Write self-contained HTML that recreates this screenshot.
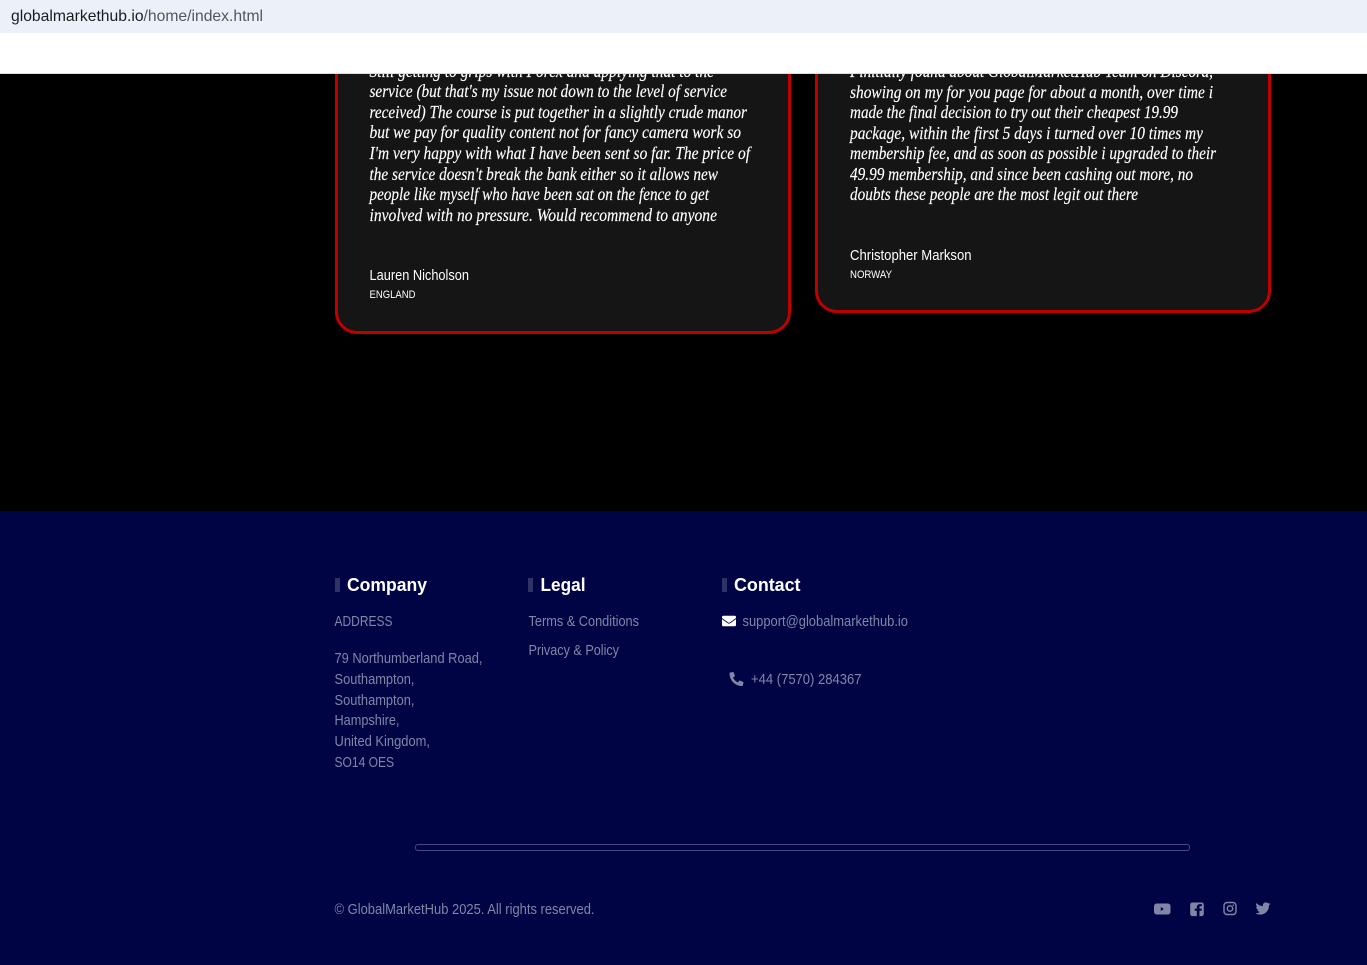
<!DOCTYPE html>
<html lang="en">
<head>
<meta charset="utf-8">
<title>GlobalMarketHub</title>
<style>
html,body{margin:0;padding:0;width:1367px;height:965px;overflow:hidden;background:#000}
.abs{position:absolute;box-sizing:border-box}
svg{position:absolute;left:0;top:0}
.q{font-family:"Liberation Serif",serif;font-style:italic;font-size:17.5px;fill:#fff;stroke:#fff;stroke-width:.15px}
.n{font-family:"Liberation Sans",sans-serif;font-size:15px;fill:#fff}
.c{font-family:"Liberation Sans",sans-serif;font-size:11px;fill:#fff}
.h{font-family:"Liberation Sans",sans-serif;font-weight:700;font-size:18px;fill:#fff}
.f{font-family:"Liberation Sans",sans-serif;font-size:14.5px;fill:#8185a6}
.u{font-family:"Liberation Sans",sans-serif;font-size:16px}
</style>
</head>
<body>
<div class="abs" style="left:0;top:0;width:1367px;height:965px;background:#000"></div>
<div class="abs" style="left:335px;top:20px;width:456px;height:314px;background:#151515;border:3px solid #c00000;border-radius:22px"></div>
<div class="abs" style="left:815px;top:20px;width:456px;height:293px;background:#151515;border:3px solid #c00000;border-radius:22px"></div>
<div class="abs" style="left:0;top:511px;width:1367px;height:454px;background:#000445"></div>
<div class="abs" style="left:415px;top:844px;width:775px;height:7px;border:1px solid #454a7a;border-radius:3px"></div>
<div class="abs" style="left:335px;top:578px;width:5px;height:14px;background:#2e3266"></div>
<div class="abs" style="left:528px;top:578px;width:5px;height:14px;background:#2e3266"></div>
<div class="abs" style="left:722px;top:578px;width:5px;height:14px;background:#2e3266"></div>

<svg width="1367" height="965" viewBox="0 0 1367 965" xmlns="http://www.w3.org/2000/svg">
<g class="q">
<text x="369.5" y="77" textLength="344.5" lengthAdjust="spacingAndGlyphs">Still getting to grips with Forex and applying that to the</text>
<text x="369.5" y="97" textLength="357.5" lengthAdjust="spacingAndGlyphs">service (but that's my issue not down to the level of service</text>
<text x="369.5" y="118" textLength="377.5" lengthAdjust="spacingAndGlyphs">received) The course is put together in a slightly crude manor</text>
<text x="369.5" y="138" textLength="371.5" lengthAdjust="spacingAndGlyphs">but we pay for quality content not for fancy camera work so</text>
<text x="369.5" y="159" textLength="380.5" lengthAdjust="spacingAndGlyphs">I'm very happy with what I have been sent so far. The price of</text>
<text x="369.5" y="180" textLength="348.5" lengthAdjust="spacingAndGlyphs">the service doesn't break the bank either so it allows new</text>
<text x="369.5" y="200" textLength="339.5" lengthAdjust="spacingAndGlyphs">people like myself who have been sat on the fence to get</text>
<text x="369.5" y="221" textLength="347.5" lengthAdjust="spacingAndGlyphs">involved with no pressure. Would recommend to anyone</text>

<text x="850" y="77" textLength="363" lengthAdjust="spacingAndGlyphs">Finitially found about GlobalMarketHub Team on Discord,</text>
<text x="850" y="98" textLength="363" lengthAdjust="spacingAndGlyphs">showing on my for you page for about a month, over time i</text>
<text x="850" y="118" textLength="328" lengthAdjust="spacingAndGlyphs">made the final decision to try out their cheapest 19.99</text>
<text x="850" y="139" textLength="353" lengthAdjust="spacingAndGlyphs">package, within the first 5 days i turned over 10 times my</text>
<text x="850" y="159" textLength="366" lengthAdjust="spacingAndGlyphs">membership fee, and as soon as possible i upgraded to their</text>
<text x="850" y="180" textLength="343" lengthAdjust="spacingAndGlyphs">49.99 membership, and since been cashing out more, no</text>
<text x="850" y="200" textLength="288" lengthAdjust="spacingAndGlyphs">doubts these people are the most legit out there</text>
</g>

<text class="n" x="369.5" y="280" textLength="99.5" lengthAdjust="spacingAndGlyphs">Lauren Nicholson</text>
<text class="c" x="369.5" y="298" textLength="46" lengthAdjust="spacingAndGlyphs">ENGLAND</text>
<text class="n" x="850" y="260" textLength="121.5" lengthAdjust="spacingAndGlyphs">Christopher Markson</text>
<text class="c" x="850" y="278" textLength="42" lengthAdjust="spacingAndGlyphs">NORWAY</text>

<text class="h" x="347" y="591" textLength="80" lengthAdjust="spacingAndGlyphs">Company</text>
<text class="h" x="540.5" y="591" textLength="45" lengthAdjust="spacingAndGlyphs">Legal</text>
<text class="h" x="734" y="591" textLength="66.5" lengthAdjust="spacingAndGlyphs">Contact</text>

<g class="f">
<text x="334.5" y="626" textLength="58" lengthAdjust="spacingAndGlyphs">ADDRESS</text>
<text x="334.5" y="663" textLength="148" lengthAdjust="spacingAndGlyphs">79 Northumberland Road,</text>
<text x="334.5" y="684" textLength="80" lengthAdjust="spacingAndGlyphs">Southampton,</text>
<text x="334.5" y="705" textLength="80" lengthAdjust="spacingAndGlyphs">Southampton,</text>
<text x="334.5" y="725" textLength="65" lengthAdjust="spacingAndGlyphs">Hampshire,</text>
<text x="334.5" y="746" textLength="95.5" lengthAdjust="spacingAndGlyphs">United Kingdom,</text>
<text x="334.5" y="767" textLength="59.5" lengthAdjust="spacingAndGlyphs">SO14 OES</text>
<text x="528.5" y="626" textLength="110.5" lengthAdjust="spacingAndGlyphs">Terms &amp; Conditions</text>
<text x="528.5" y="655" textLength="90.5" lengthAdjust="spacingAndGlyphs">Privacy &amp; Policy</text>
<text x="742.5" y="626" textLength="165.5" lengthAdjust="spacingAndGlyphs">support@globalmarkethub.io</text>
<text x="751" y="684" textLength="110.5" lengthAdjust="spacingAndGlyphs">+44 (7570) 284367</text>
<text x="334.5" y="914" textLength="260" lengthAdjust="spacingAndGlyphs">© GlobalMarketHub 2025. All rights reserved.</text>
</g>

<!-- envelope -->
<svg x="722" y="614" width="14" height="14" viewBox="0 0 512 512"><path fill="#fff" d="M502.3 190.8c3.9-3.1 9.7-.2 9.7 4.7V400c0 26.5-21.5 48-48 48H48c-26.5 0-48-21.5-48-48V195.6c0-5 5.7-7.8 9.7-4.7 22.4 17.4 52.1 39.5 154.1 113.6 21.1 15.4 56.7 47.8 92.2 47.6 35.7.3 72-32.8 92.3-47.6 102-74.1 131.6-96.3 154-113.7zM256 320c23.2.4 56.6-29.2 73.4-41.4 132.7-96.3 142.8-104.7 173.4-128.7 5.8-4.5 9.2-11.5 9.2-18.9v-19c0-26.5-21.5-48-48-48H48C21.5 64 0 85.5 0 112v19c0 7.4 3.4 14.3 9.2 18.9 30.6 23.9 40.7 32.4 173.4 128.7 16.8 12.2 50.2 41.8 73.4 41.4z"/></svg>
<!-- phone -->
<svg x="729.5" y="672" width="14" height="14" viewBox="0 0 512 512"><path fill="#8185a6" transform="translate(512 0) scale(-1 1)" d="M493.4 24.6l-104-24c-11.3-2.6-22.9 3.3-27.5 13.9l-48 112c-4.2 9.8-1.4 21.3 6.9 28l60.6 49.6c-36 76.7-98.9 140.5-177.2 177.2l-49.6-60.6c-6.8-8.3-18.2-11.1-28-6.9l-112 48C3.9 366.5-2 378.1.6 389.4l24 104C27.1 504.2 36.7 512 48 512c256.1 0 464-207.5 464-464 0-11.2-7.7-20.9-18.6-23.4z"/></svg>
<!-- youtube -->
<path fill="#8185a6" fill-rule="evenodd" d="M1157 903.500h10.500c2 0 3 1.200 3 3v5c0 1.800-1 3-3 3H1157c-2 0-3-1.200-3-3v-5c0-1.800 1-3 3-3zM1160.800 907v4l3-2z"/>
<!-- facebook square -->
<path fill="#8185a6" fill-rule="evenodd" d="M1192.500 902.500h9c1.400 0 2.300 .9 2.300 2.300v9c0 1.400-.9 2.300-2.300 2.300h-2v-5.300h2l.4-2.200h-2.400v-1.300c0-.8.4-1.200 1.200-1.200h1.200v-2h-1.900c-2.100 0-3.200 1.200-3.200 3.200v1.300h-2.100v2.200h2.100v5.300h-4.300c-1.400 0-2.300-.9-2.300-2.300v-9c0-1.400.9-2.300 2.300-2.300z"/>
<!-- instagram -->
<rect x="1224" y="902.500" width="12" height="12" rx="3" fill="none" stroke="#8185a6" stroke-width="1.400"/>
<circle cx="1230" cy="908.500" r="2.700" fill="none" stroke="#8185a6" stroke-width="1.400"/>
<circle cx="1233.300" cy="905.200" r=".8" fill="#8185a6"/>
<!-- twitter -->
<svg x="1255.500" y="901" width="15" height="15" viewBox="0 0 512 512"><path fill="#8185a6" d="M459.37 151.716c.325 4.548.325 9.097.325 13.645 0 138.72-105.583 298.558-298.558 298.558-59.452 0-114.68-17.219-161.137-47.106 8.447.974 16.568 1.299 25.34 1.299 49.055 0 94.213-16.568 130.274-44.832-46.132-.975-84.792-31.188-98.112-72.772 6.498.974 12.995 1.624 19.818 1.624 9.421 0 18.843-1.3 27.614-3.573-48.081-9.747-84.143-51.98-84.143-102.985v-1.299c13.969 7.797 30.214 12.67 47.431 13.319-28.264-18.843-46.781-51.005-46.781-87.391 0-19.492 5.197-37.36 14.294-52.954 51.655 63.675 129.3 105.258 216.365 109.807-1.624-7.797-2.599-15.918-2.599-24.04 0-57.828 46.782-104.934 104.934-104.934 30.213 0 57.502 12.67 76.67 33.137 23.715-4.548 46.456-13.32 66.599-25.34-7.798 24.366-24.366 44.833-46.132 57.827 21.117-2.273 41.584-8.122 60.426-16.243-14.292 20.791-32.161 39.308-52.628 54.253z"/></svg>
</svg>

<div class="abs" style="left:0;top:0;width:1367px;height:33px;background:#ebf0f9"></div>
<div class="abs" style="left:0;top:33px;width:1367px;height:41px;background:#fff;border-bottom:1px solid #dcdcdc"></div>
<svg width="1367" height="34" viewBox="0 0 1367 34" xmlns="http://www.w3.org/2000/svg">
<text class="u" x="11" y="21" fill="#1b1c1f" textLength="252" lengthAdjust="spacingAndGlyphs">globalmarkethub.io<tspan fill="#53565c">/home/index.html</tspan></text>
</svg>
</body>
</html>
